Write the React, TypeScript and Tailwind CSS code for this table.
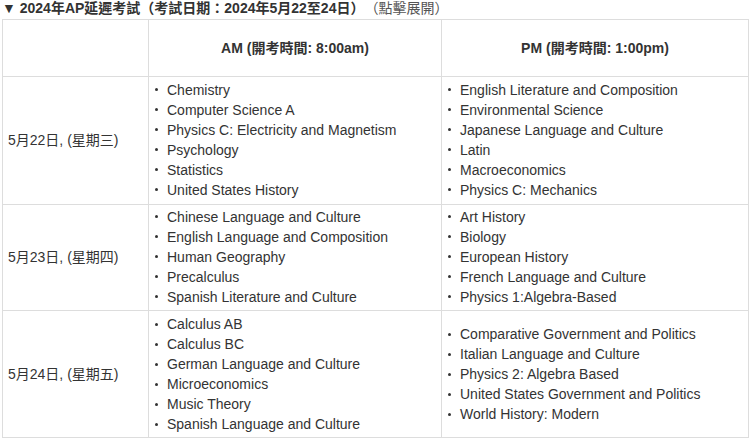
import React from 'react';

type Row = {
  date: string;
  am: string[];
  pm: string[];
  height: string;
  pad: string;
};

const rows: Row[] = [
  {
    date: '5月22日, (星期三)',
    am: [
      'Chemistry',
      'Computer Science A',
      'Physics C: Electricity and Magnetism',
      'Psychology',
      'Statistics',
      'United States History',
    ],
    pm: [
      'English Literature and Composition',
      'Environmental Science',
      'Japanese Language and Culture',
      'Latin',
      'Macroeconomics',
      'Physics C: Mechanics',
    ],
    height: 'h-[128px]',
    pad: 'pt-[1px] pb-[3px]',
  },
  {
    date: '5月23日, (星期四)',
    am: [
      'Chinese Language and Culture',
      'English Language and Composition',
      'Human Geography',
      'Precalculus',
      'Spanish Literature and Culture',
    ],
    pm: ['Art History', 'Biology', 'European History', 'French Language and Culture', 'Physics 1:Algebra-Based'],
    height: 'h-[106px]',
    pad: 'pt-[1px] pb-[3px]',
  },
  {
    date: '5月24日, (星期五)',
    am: [
      'Calculus AB',
      'Calculus BC',
      'German Language and Culture',
      'Microeconomics',
      'Music Theory',
      'Spanish Language and Culture',
    ],
    pm: [
      'Comparative Government and Politics',
      'Italian Language and Culture',
      'Physics 2: Algebra Based',
      'United States Government and Politics',
      'World History: Modern',
    ],
    height: 'h-[127px]',
    pad: 'pt-[3px] pb-[3px]',
  },
];

const SubjectList = ({ items, pad }: { items: string[]; pad: string }) => (
  <ul className={pad}>
    {items.map((s) => (
      <li key={s} className="flex items-center h-5 leading-5">
        <span className="w-[3px] h-[3px] rounded-full bg-[#333] ml-[6px] mr-[9px] shrink-0" />
        <span>{s}</span>
      </li>
    ))}
  </ul>
);

export default function App() {
  return (
    <div className="w-[751px] h-[440px] bg-white text-[#333] text-[14px] font-['Liberation_Sans','Noto_Sans_CJK_TC',sans-serif] overflow-hidden">
      <div className="pl-[2px] h-[19px] leading-[17px] whitespace-nowrap [text-spacing-trim:space-all]">
        <span className="font-bold">▼ 2024年AP延遲考試（考試日期：2024年5月22至24日）</span>
        <span className="text-[#555]">（點擊展開）</span>
      </div>
      <div className="pl-[2px]">
        <table className="w-[747px] border-collapse table-fixed">
          <colgroup>
            <col className="w-[146px]" />
            <col className="w-[293px]" />
            <col />
          </colgroup>
          <thead>
            <tr className="h-[57px]">
              <th className="border border-[#ddd]" />
              <th className="border border-[#ddd] font-bold text-center align-middle">AM (開考時間: 8:00am)</th>
              <th className="border border-[#ddd] font-bold text-center align-middle">PM (開考時間: 1:00pm)</th>
            </tr>
          </thead>
          <tbody>
            {rows.map((r) => (
              <tr key={r.date} className={r.height}>
                <td className="border border-[#ddd] pl-[5px] align-middle">{r.date}</td>
                <td className="border border-[#ddd] align-middle">
                  <SubjectList items={r.am} pad={r.pad} />
                </td>
                <td className="border border-[#ddd] align-middle">
                  <SubjectList items={r.pm} pad={r.pad} />
                </td>
              </tr>
            ))}
          </tbody>
        </table>
      </div>
    </div>
  );
}
